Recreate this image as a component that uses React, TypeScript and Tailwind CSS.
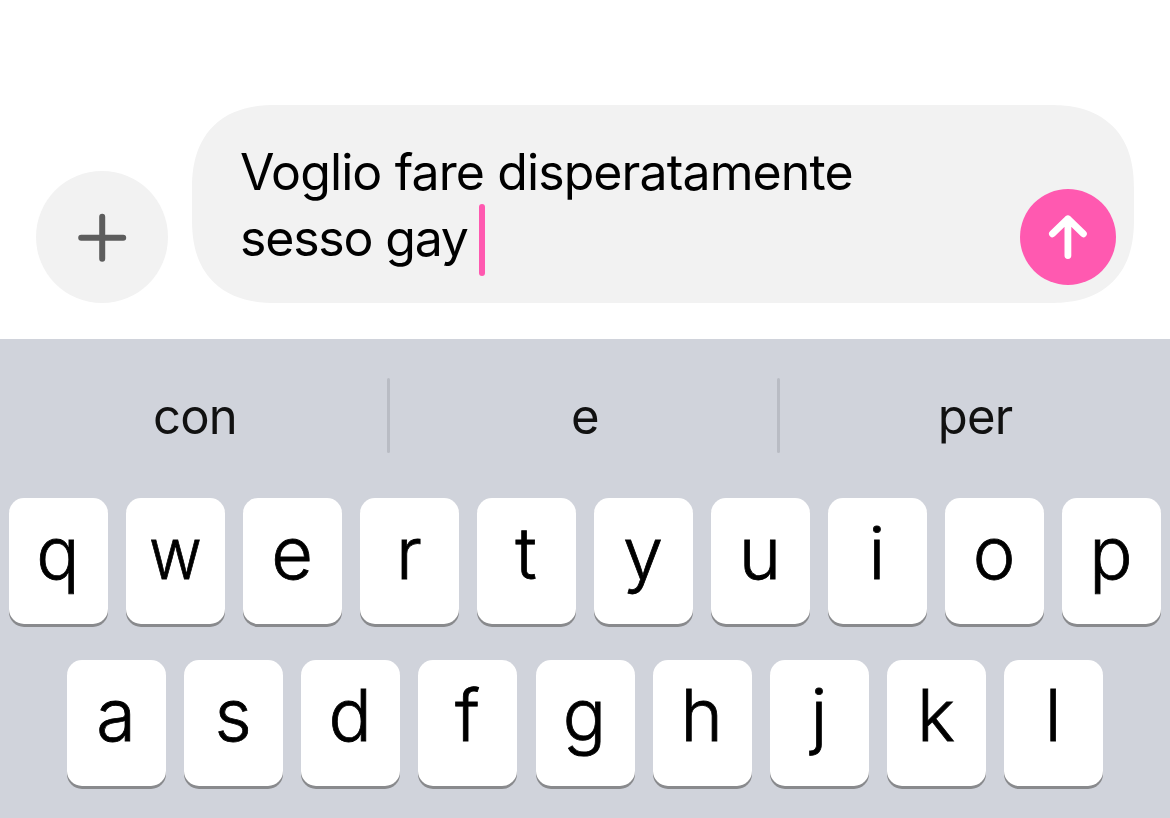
import React from 'react';

interface KeyProps {
  label: string;
}

const suggestions = ['con', 'e', 'per'];
const topRow = ['q', 'w', 'e', 'r', 't', 'y', 'u', 'i', 'o', 'p'];
const middleRow = ['a', 's', 'd', 'f', 'g', 'h', 'j', 'k', 'l'];

const Key: React.FC<KeyProps> = ({ label }) => (
  <button
    type="button"
    className="flex h-[126px] w-[99px] shrink-0 items-center justify-center rounded-[15px] bg-white pr-px pb-[17px] text-[72px] font-light leading-none text-black shadow-[0_3px_0_#898a8d] [-webkit-text-stroke:0.8px_#000]"
  >
    {label === 'w' ? <span className="scale-x-90">{label}</span> : label}
  </button>
);

const App: React.FC = () => {
  return (
    <div className="flex h-[818px] w-[1170px] flex-col overflow-hidden bg-white font-['Inter',sans-serif]">
      {/* Composer */}
      <div className="flex h-[339px] shrink-0 items-end gap-6 pb-9 pl-9">
        <button type="button" className="flex size-[132px] items-center justify-center rounded-full bg-[#f2f2f2]">
          <svg className="size-[50px]" viewBox="0 0 50 50" fill="none" stroke="#5d5d5d" strokeWidth="6" strokeLinecap="round">
            <path d="M25.2 4.7v42M4.2 25.7h42" />
          </svg>
        </button>
        <div className="flex h-[198px] w-[942px] items-end justify-between rounded-[84px] bg-[#f2f2f2] pr-[18px] pl-12 [corner-shape:superellipse(1.25)]">
          <div className="h-[164px] text-[50px] leading-[67px] tracking-[-0.89px] text-black">
            <p className="whitespace-nowrap">Voglio fare disperatamente</p>
            <p className="flex h-[67px] items-center whitespace-nowrap">
              <span className="pb-[3px] tracking-[-1.2px]">sesso gay</span>
              <span className="ml-[11px] h-[72px] w-1.5 rounded-[3px] bg-[#ff59b0]" />
            </p>
          </div>
          <button type="button" className="mb-[18px] flex size-24 items-center justify-center rounded-full bg-[#ff59b0]">
            <svg className="size-12" viewBox="0 0 48 48" fill="none" stroke="#fff" strokeWidth="6.8" strokeLinecap="round" strokeLinejoin="round">
              <path d="M23.9 42.6V5.8M8.4 20.8L23.9 5.8l15.5 15" />
            </svg>
          </button>
        </div>
      </div>

      {/* Keyboard */}
      <div className="flex-1 bg-[#d0d3db]">
        <div className="flex h-[159px]">
          {suggestions.map((word, i) => (
            <div key={word} className="flex w-[390px] items-center pb-[6px] pl-[3px]">
              <div className="flex-1 pt-0.5 text-center text-[49px] leading-none tracking-[-0.8px] text-[#111]">{word}</div>
              {i < 2 ? <div className="h-[75px] w-[3px] rounded-full bg-[#b9bcc4]" /> : <div className="w-[3px]" />}
            </div>
          ))}
        </div>
        <div className="flex gap-[18px] pl-[9px]">
          {topRow.map((letter) => (
            <Key key={letter} label={letter} />
          ))}
        </div>
        <div className="mt-9 flex gap-[18.15px] pl-[67px]">
          {middleRow.map((letter) => (
            <Key key={letter} label={letter} />
          ))}
        </div>
      </div>
    </div>
  );
};

export default App;
